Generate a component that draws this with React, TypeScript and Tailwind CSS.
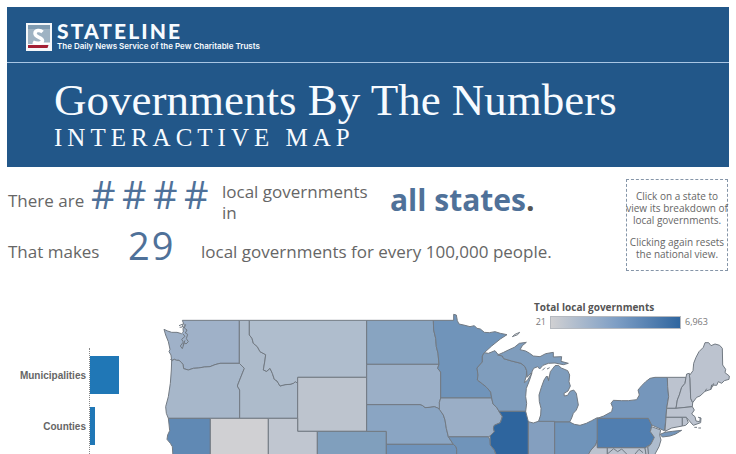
import React from "react";

type Shape = { id: string; fill: string; d: string };

const states: Shape[] = [
  { id: "WA", fill: "#9fb1c8", d: "M82 61H253V190H195L180 194 165 200 148 201 130 204 115 205 100 210 86 206 84 194 80 188 72 181 65 181 58 178 50 182 48 165 42 155 45 148 40 125 32 105 27 88 38 93 50 97 66 97 80 101 85 96 84 86 88 76Z" },
  { id: "OR", fill: "#a7b7ca", d: "M50 182L58 178 65 181 72 181 80 188 84 194 86 206 100 210 115 205 130 204 148 201 165 200 180 194 195 190H253L268 205 260 225 254 240 247 258 254 270V355H40L34 340 32 320 40 290 46 250 49 210Z" },
  { id: "ID", fill: "#adbbcb", d: "M253 61H283V105L291 115 295 130 307 140 315 155 332 164 330 180 325 210 335 214 345 205 352 220 358 238 366 243 375 258 390 254 405 253 415 250 421 245 428 250V355H254V270L247 258 254 240 260 225 268 205 253 190Z" },
  { id: "MT", fill: "#afbdcd", d: "M283 61H635V232H428V250L421 245 415 250 405 253 390 254 375 258 366 243 358 238 352 220 345 205 335 214 325 210 330 180 332 164 315 155 307 140 295 130 291 115 283 105Z" },
  { id: "WY", fill: "#bdc4ce", d: "M428 232H635V394H428Z" },
  { id: "CA", fill: "#6089b4", d: "M40 355H166V470H54L52 440 46 430 36 418 38 405 44 392 42 372Z" },
  { id: "NV", fill: "#d0d0d3", d: "M166 355H340V470H166Z" },
  { id: "UT", fill: "#c0c6d0", d: "M340 355H428V394H487V470H340Z" },
  { id: "CO", fill: "#809fbd", d: "M487 394H694V470H487Z" },
  { id: "ND", fill: "#88a4c1", d: "M635 61H835L836 90 842 115 844 140 849 160 852 193H635Z" },
  { id: "SD", fill: "#9bafc7", d: "M635 193H852L848 205 857 216V295L853 308 856 328 848 324 838 320 825 322 810 323 803 317 795 314H635Z" },
  { id: "NE", fill: "#8aa5c3", d: "M635 314H795L803 317 810 323 825 322 838 320 848 324 856 330 865 345 870 360 874 385 880 410 895 433H694V394H635Z" },
  { id: "KS", fill: "#6f93bb", d: "M694 433H895L903 440 905 448V470H694Z" },
  { id: "MO", fill: "#7094ba", d: "M880 410H1000L1005 420 1006 435 1018 450 1024 470H905V448L903 440 895 433Z" },
  { id: "MN", fill: "#7094ba", d: "M835 61H896V43L904 45 907 62 912 72 930 76 945 80 958 77 966 85 976 87 988 97 1003 98 1020 95 1036 100 1056 104 1036 117 1010 138 988 158 982 168V186L966 204 969 225 967 240 983 252 995 262 1007 276 1010 294H857V216L848 205 852 193 849 160 844 140 842 115 836 90Z" },
  { id: "IA", fill: "#9aaec6", d: "M857 294H1010L1014 312 1025 322 1032 334 1042 350 1036 368 1018 376 1015 384 1018 395 1005 408 1000 410H880L874 385 870 360 865 345 853 328 853 308Z" },
  { id: "WI", fill: "#7f9dbd", d: "M988 158L1000 160 1020 152 1028 162 1042 168 1046 176 1070 183 1098 190 1110 200 1115 212 1114 228 1108 248 1118 240 1131 218 1122 245 1114 265 1112 290 1115 310 1112 334H1032L1025 322 1014 312 1010 294 1007 276 995 262 983 252 967 240 969 225 966 204 982 186V168Z" },
  { id: "MI-U", fill: "#7f9dbd", d: "M1028 165L1046 157 1060 150 1078 142 1093 130 1114 127 1102 137 1095 149 1112 153 1124 160 1135 168 1155 170 1172 161 1195 157V171L1220 170 1218 184 1240 190 1225 194 1200 189 1180 190 1164 196 1154 207 1148 200 1136 205 1130 217 1116 232 1115 212 1110 200 1098 190 1070 183 1046 176 1042 168Z" },
  { id: "MI-L", fill: "#7f9dbd", d: "M1200 197L1210 196 1219 204 1238 212 1244 225 1242 245 1246 258 1239 273 1227 280 1228 288 1238 286 1245 274 1256 270 1264 280 1270 315 1264 330 1255 340 1250 354 1244 366H1150L1157 345 1158 325 1153 305 1152 285 1159 262 1167 240 1175 228 1181 240 1186 215Z" },
  { id: "IL", fill: "#2e659e", d: "M1032 334H1112L1120 365V470H1026L1018 450 1006 435 1005 408 1018 395 1015 384 1018 376 1036 368 1042 350Z" },
  { id: "IN", fill: "#849fbf", d: "M1120 365L1135 369 1150 364H1199V470H1120Z" },
  { id: "OH", fill: "#7094ba", d: "M1199 366H1244L1258 373 1275 376 1294 370 1310 362 1327 353V420L1322 435 1308 450 1298 470H1199Z" },
  { id: "WV", fill: "#bcc3cf", d: "M1327 443H1357V470H1296L1308 450 1322 435 1327 420Z" },
  { id: "MD", fill: "#bcc3cf", d: "M1357 443H1470L1474 470H1357Z" },
  { id: "PA", fill: "#507eb0", d: "M1327 355H1480L1490 375 1486 395 1498 412 1488 432 1470 443H1327Z" },
  { id: "NY", fill: "#7596bb", d: "M1327 355L1346 348 1370 335 1373 322 1368 310 1375 301 1400 302 1420 302 1445 299 1453 285 1449 270 1460 257 1472 245 1485 235 1500 232H1537L1538 260 1541 290 1535 325 1532 365 1528 392 1510 384 1490 375 1480 355Z" },
  { id: "LI", fill: "#7596bb", d: "M1515 403L1530 397 1552 394 1580 391 1562 402 1545 408 1522 411Z" },
  { id: "NJ", fill: "#aebccd", d: "M1490 380L1517 390 1514 405 1518 420 1512 440 1500 462V470H1480L1478 443 1488 432 1498 412 1486 395Z" },
  { id: "DE", fill: "#bcc3cf", d: "M1470 443L1478 440 1481 470H1474Z" },
  { id: "VT", fill: "#bcc3cf", d: "M1537 232H1593L1590 250 1580 262 1573 285 1567 300 1563 325H1535L1541 290 1538 260Z" },
  { id: "NH", fill: "#bcc3cf", d: "M1593 232L1595 222 1603 220 1605 235 1607 295 1613 308 1612 320 1563 325 1567 300 1573 285 1580 262 1590 250Z" },
  { id: "ME", fill: "#bcc3cf", d: "M1603 227L1614 212 1616 190 1623 172 1632 155 1645 142 1650 128 1661 128 1668 137 1680 132 1694 136 1702 145 1703 195 1712 208 1710 218 1723 228 1722 238 1708 242 1700 250 1690 245 1685 256 1670 255 1668 268 1650 274 1635 288 1625 292 1613 308 1607 295 1605 235Z" },
  { id: "MA", fill: "#bcc3cf", d: "M1535 325H1563L1612 320 1618 330 1610 342 1620 350 1623 363 1634 365 1636 354 1630 352 1638 354 1637 368 1615 376 1606 366 1594 352H1533Z" },
  { id: "CT", fill: "#bcc3cf", d: "M1533 352H1582V378L1550 384 1530 394Z" },
  { id: "RI", fill: "#bcc3cf", d: "M1582 352H1594L1600 368 1592 376 1582 378Z" },
];

const coastDetail =
  "M72 77L84 72 82 81 74 82M92 73L88 84 96 90 91 99 98 103 94 116 100 125 93 132 88 128 82 146 76 138 85 126 80 118 90 109 84 102M84 136L90 121M46 178L52 182M1072 110L1080 103 1094 97 1088 104ZM1162 211L1170 203M1176 207L1184 203M1178 228L1181 243M1618 382H1626M1630 384H1638M1357 462L1376 446 1388 455 1400 447 1415 462M1440 462L1452 448 1464 458M1668 268L1670 255M1672 262L1676 250M1650 274L1655 266";

const bars = [
  { name: "Municipalities", width: 29 },
  { name: "Counties", width: 5 },
];

function Logo() {
  return (
    <svg viewBox="0 0 26 28" className="h-7 w-[26px]" aria-hidden="true">
      <rect width="26" height="28" fill="#f4f7fa" />
      <rect x="2" y="2" width="22" height="19" fill="#9fb3c3" />
      <path d="M2 2h22v4H2z" fill="#7f9bb1" />
      <path
        d="M16.500 9C14.500 7 9 6.800 9 10.500c0 4.300 7.500 3.200 7.500 7 0 3.400-6 3.200-9.500 1.500"
        fill="none"
        stroke="#fff"
        strokeWidth="3.500"
      />
      <path d="M14 19.500h10V21H12z" fill="#fff" />
      <path d="M2 22h20.500l-1 3H2z" fill="#a31f34" />
    </svg>
  );
}

function Header() {
  return (
    <header className="bg-[#225789] text-[#f7fbff]">
      <div className="flex h-14 items-center gap-[5px] border-b border-[#a9c6e4] px-[19px] pt-1">
        <Logo />
        <div>
          <p className="font-['Lato',sans-serif] text-[21px] leading-[20px] font-black tracking-widest">STATELINE</p>
          <p className="font-['Inter',sans-serif] text-[8px] leading-[11px] font-semibold">
            The Daily News Service of the Pew Charitable Trusts
          </p>
        </div>
      </div>
      <div className="h-[104px] px-[47px] pt-[14px] font-['Liberation_Serif',serif]">
        <h1 className="text-[45px] leading-[46px] whitespace-nowrap">Governments By The Numbers</h1>
        <p className="text-[25px] leading-[30px] tracking-[0.2em]">INTERACTIVE MAP</p>
      </div>
    </header>
  );
}

function Summary() {
  return (
    <section className="flex h-[133px] justify-between pt-3 pr-[1px] pl-[1px] text-[17px] text-[#666]">
      <div>
        <div className="flex h-[46px] items-start">
          <p className="w-[83px] pt-2 leading-[28px]">There are</p>
          <p className="w-[131px] text-[38px] leading-[30px] tracking-[0.17em] text-[#4f7199]">####</p>
          <p className="w-[168px] pt-[2px] leading-[21px]">
            local governments
            <br />
            in
          </p>
          <p className="text-[30px] leading-[42px] font-bold text-[#555]">
            <span className="text-[#4f7199]">all states</span>.
          </p>
        </div>
        <div className="flex items-center">
          <p className="w-[120px] pt-[14px]">That makes</p>
          <p className="w-[73px] text-[38px] leading-[38px] tracking-[0.05em] text-[#4f7199]">29</p>
          <p className="pt-[14px]">local governments for every 100,000 people.</p>
        </div>
      </div>
      <aside className="h-[92px] w-[102px] shrink-0 border border-dashed border-[#8595a8] pt-[10px] text-center text-[10px] leading-[12px] whitespace-nowrap">
        <p>
          Click on a state to
          <br />
          <span className="-mx-1">view its breakdown of</span>
          <br />
          local governments.
        </p>
        <p className="mt-[10px]">
          Clicking again resets
          <br />
          the national view.
        </p>
      </aside>
    </section>
  );
}

function BarChart() {
  return (
    <section className="w-[148px] shrink-0 pt-12 font-['Liberation_Sans',sans-serif] text-[10px] font-bold text-[#666]">
      <ul className="ml-[82px] flex h-[106px] flex-col gap-[13px] border-l border-dotted border-[#888] pt-2">
        {bars.map((bar) => (
          <li key={bar.name} className="-ml-[83px] flex h-[38px] items-center gap-1">
            <span className="w-[79px] text-right">{bar.name}</span>
            <span className="h-full bg-[#2077b6]" style={{ width: bar.width }} />
          </li>
        ))}
      </ul>
    </section>
  );
}

function StateMap() {
  return (
    <section className="relative min-w-0 flex-1">
      <svg viewBox="0 0 1743 462" className="block w-full" role="img" aria-label="Total local governments by state">
        <g stroke="#727a83" strokeWidth="3" strokeLinejoin="round">
          {states.map((s) => (
            <path key={s.id} d={s.d} fill={s.fill} />
          ))}
          <path d={coastDetail} fill="none" />
        </g>
      </svg>
      <div className="absolute top-0 right-[24px] w-[178px] text-[#777]">
        <p className="text-[10px] leading-[15px] font-bold text-[#555]">Total local governments</p>
        <div className="flex items-center gap-1 text-[9px] leading-[14px]">
          <span className="w-3 text-right">21</span>
          <span className="h-[13px] w-[131px] border border-[#b5b9bf] bg-linear-to-r from-[#d0d0d2] via-[#7f9fc5] to-[#2f669f]" />
          <span>6,963</span>
        </div>
      </div>
    </section>
  );
}

export default function App() {
  return (
    <main className="overflow-hidden bg-white pt-[7px] font-['Open_Sans','Noto_Sans',sans-serif]">
      <div className="px-[7px]">
        <Header />
        <Summary />
      </div>
      <div className="flex pl-[7px]">
        <BarChart />
        <StateMap />
      </div>
    </main>
  );
}
